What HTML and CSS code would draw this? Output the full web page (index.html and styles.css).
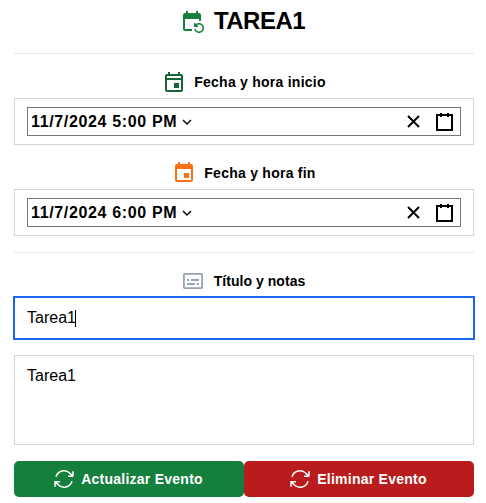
FILE: index.html
```html
<!DOCTYPE html>
<html lang="es">
<head>
<meta charset="utf-8">
<title>Tarea1</title>
<link rel="stylesheet" href="styles.css">
</head>
<body>
<main class="form">
  <header class="heading">
    <svg class="icon green" viewBox="0 0 24 24"><path d="M21 12V6c0-1.1-.9-2-2-2h-1V2h-2v2H8V2H6v2H5c-1.1 0-2 .9-2 2v14c0 1.1.9 2 2 2h7v-2H5V10h14v2h2zm-5.36 8c.43 1.45 1.77 2.5 3.36 2.5 1.93 0 3.5-1.57 3.5-3.5s-1.57-3.5-3.5-3.5c-.95 0-1.82.38-2.45 1H18V18h-4v-4h1.5v1.43c.9-.88 2.14-1.43 3.5-1.43 2.76 0 5 2.24 5 5s-2.24 5-5 5c-2.42 0-4.44-1.72-4.9-4h1.54z"/></svg>
    <h1><span>TAREA1</span></h1>
  </header>

  <div class="label">
    <svg class="icon dark-green" viewBox="0 0 24 24"><path d="M19 4h-1V2h-2v2H8V2H6v2H5c-1.1 0-2 .9-2 2v14c0 1.1.9 2 2 2h14c1.1 0 2-.9 2-2V6c0-1.1-.9-2-2-2zm0 16H5V10h14v10zm0-12H5V6h14v2zM12 13h5v5h-5z"/></svg>
    <span>Fecha y hora inicio</span>
  </div>
  <div class="field">
    <div class="picker">
      <span class="value">11/7/2024 5:00 PM</span>
      <svg class="chevron" viewBox="0 0 10 10"><path d="M1 3 5 7l4-4"/></svg>
      <svg class="clear" viewBox="0 0 13 13"><path d="m1 1 11 11M12 1 1 12"/></svg>
      <svg class="calendar" viewBox="0 0 17 18"><path d="M1 2h15v15H1zM5 0v4M12 0v4"/></svg>
    </div>
  </div>

  <div class="label second">
    <svg class="icon orange" viewBox="0 0 24 24"><path d="M17 12h-5v5h5v-5zM16 1v2H8V1H6v2H5c-1.110 0-1.990.9-1.990 2L3 19c0 1.100.890 2 2 2h14c1.100 0 2-.9 2-2V5c0-1.100-.9-2-2-2h-1V1h-2zm3 18H5V8h14v11z"/></svg>
    <span>Fecha y hora fin</span>
  </div>
  <div class="field">
    <div class="picker">
      <span class="value">11/7/2024 6:00 PM</span>
      <svg class="chevron" viewBox="0 0 10 10"><path d="M1 3 5 7l4-4"/></svg>
      <svg class="clear" viewBox="0 0 13 13"><path d="m1 1 11 11M12 1 1 12"/></svg>
      <svg class="calendar" viewBox="0 0 17 18"><path d="M1 2h15v15H1zM5 0v4M12 0v4"/></svg>
    </div>
  </div>

  <section class="notes">
    <div class="label third">
      <svg class="icon subtitles" viewBox="0 0 24 24"><rect x="2.900" y="4.900" width="18.200" height="14.200" rx=".8"/><path d="M6 11h2M10 11h8M6 15h8M16 15h2"/></svg>
      <span>Título y notas</span>
    </div>
    <div class="title-input"><span>Tarea1</span><i class="caret"></i></div>
    <div class="textarea">Tarea1</div>
  </section>

  <div class="actions">
    <button class="update">
      <svg class="icon refresh" viewBox="0 0 24 24"><path d="M16.023 9.348h4.992M2.985 19.644v-4.992h4.992m-4.993 0 3.181 3.183a8.250 8.250 0 0 0 13.803-3.700M4.031 9.865a8.250 8.250 0 0 1 13.803-3.700l3.181 3.182m0-4.991v4.990"/></svg>
      <span>Actualizar Evento</span>
    </button>
    <button class="delete">
      <svg class="icon refresh" viewBox="0 0 24 24"><path d="M16.023 9.348h4.992M2.985 19.644v-4.992h4.992m-4.993 0 3.181 3.183a8.250 8.250 0 0 0 13.803-3.700M4.031 9.865a8.250 8.250 0 0 1 13.803-3.700l3.181 3.182m0-4.991v4.990"/></svg>
      <span>Eliminar Evento</span>
    </button>
  </div>
</main>
</body>
</html>
```
FILE: styles.css
```css
* { box-sizing: border-box; }
body {
  margin: 0;
  background: #fff;
  color: #000;
  font-family: "Liberation Sans", Arial, sans-serif;
  overflow: hidden;
}
.form { width: 460px; margin-left: 14px; }
.icon { width: 24px; height: 24px; flex: none; fill: currentColor; }
.green { color: #15803d; }
.dark-green { color: #166534; }
.orange { color: #f97316; }
.heading {
  display: flex;
  justify-content: center;
  gap: 10px;
  height: 54px;
  padding: 9px 3px 0 0;
  border-bottom: 1px solid #e5e7eb;
}
h1 { margin: 0; font-size: 24px; line-height: 24px; letter-spacing: -.5px; }
.label {
  display: flex;
  align-items: center;
  justify-content: center;
  gap: 8px;
  height: 24px;
  margin: 16px 0 4px;
  font-size: 14px;
  font-weight: 700;
  line-height: 20px;
  letter-spacing: .25px;
}
.field { height: 47px; padding: 8px 12px; border: 1px solid #d1d5db; }
.picker {
  display: flex;
  align-items: center;
  height: 29px;
  padding: 0 7px 0 3px;
  border: 1px solid #767676;
}
.value { font-size: 16px; font-weight: 700; letter-spacing: .65px; white-space: pre; }
.picker svg { fill: none; stroke: #000; flex: none; }
.chevron { width: 10px; height: 10px; margin-left: 5px; stroke-width: 1.4; }
.picker .clear { width: 13px; height: 13px; margin-left: auto; stroke-width: 2; }
.picker .calendar { width: 17px; height: 18px; margin-left: 16px; stroke-width: 2; }
.notes { margin-top: 16px; border-top: 1px solid #e5e7eb; }
.third { gap: 9px; padding-right: 2px; letter-spacing: .05px; }
.subtitles { fill: none; stroke: #94a3b8; stroke-width: 1.8; }
.title-input {
  display: flex;
  align-items: center;
  height: 42px;
  padding: 0 12px;
  border: 1px solid #1c64f2;
  outline: 1px solid #1c64f2;
  font-size: 16px;
}
.caret { width: 1px; height: 17px; margin-left: -1px; background: #000; }
.textarea {
  height: 90px;
  margin-top: 16px;
  padding: 8px 12px;
  border: 1px solid #d1d5db;
  font-size: 16px;
  line-height: 24px;
}
.actions { display: grid; grid-template-columns: 1fr 1fr; margin-top: 16px; }
button {
  display: flex;
  align-items: center;
  justify-content: center;
  gap: 5px;
  height: 36px;
  padding: 0 3px 0 0;
  border: 0;
  border-radius: 5px;
  color: #fff;
  font: 700 14px/20px "Liberation Sans", Arial, sans-serif;
  letter-spacing: .25px;
  box-shadow: 0 1px 2px rgb(0 0 0 / 5%);
}
.update { background: #15803d; }
.delete { background: #b91c1c; }
.refresh { fill: none; stroke: currentColor; stroke-width: 1.5; }
```
